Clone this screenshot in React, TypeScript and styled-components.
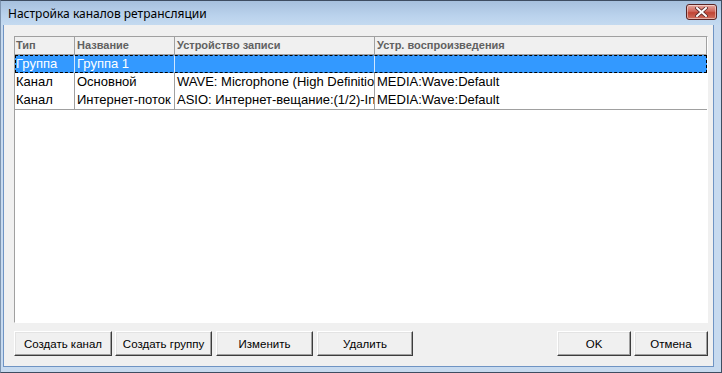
import React from 'react';
import styled, { createGlobalStyle } from 'styled-components';

const Global = createGlobalStyle`
  html, body { margin: 0; padding: 0; background: #fff; }
  body { width: 722px; height: 373px; overflow: hidden; }
`;

const Window = styled.div`
  width: 722px;
  height: 373px;
  box-sizing: border-box;
  display: flex;
  flex-direction: column;
  background: #c7daef;
  border: 1px solid #3e4d61;
  border-left-color: #7d94b0;
`;

const TitleBar = styled.div`
  height: 24px;
  flex: none;
  display: flex;
  align-items: center;
  justify-content: space-between;
  padding: 0 4px 0 7px;
  background: linear-gradient(#a6c0dd, #bad2ec 60%, #c4daf0);
`;

const Title = styled.span`
  font-family: 'Noto Sans', 'Liberation Sans', sans-serif;
  font-size: 12px;
  color: #000;
  margin-top: 1px;
`;

const CloseButton = styled.div`
  width: 31px;
  height: 16px;
  box-sizing: border-box;
  margin-top: -3px;
  border: 1px solid #5a2424;
  border-radius: 3px;
  background: linear-gradient(#e6a8a0, #d0665a 45%, #c04434 55%, #d07060);
  display: flex;
  align-items: center;
  justify-content: center;
  box-shadow: inset 0 0 0 1px rgba(255, 255, 255, 0.45);
`;

const Client = styled.div`
  flex: 1;
  display: flex;
  flex-direction: column;
  margin: 0 7px 5px 2px;
  background: #f0f0f0;
  border: 1px solid #6f94c4;
  border-top: none;
  padding: 11px 5px 10px 10px;
  min-height: 0;
`;

const ListBox = styled.div`
  flex: 1;
  display: flex;
  flex-direction: column;
  background: #fff;
  border-top: 1px solid #a0a0a0;
  border-left: 1px solid #a0a0a0;
  border-right: 1px solid #fff;
  border-bottom: 1px solid #fff;
  font-family: 'Liberation Sans', Arial, sans-serif;
`;

const cols = '59px 100px 200px 1fr';

const HeaderRow = styled.div`
  display: grid;
  grid-template-columns: ${cols};
  height: 17px;
  background: #f0f0f0;
  border-bottom: 1px solid #a0a0a0;
  border-right: 1px solid #a0a0a0;
`;

const HeaderCell = styled.div<{ $first?: boolean }>`
  font-size: 11px;
  font-weight: bold;
  color: #616161;
  line-height: 17px;
  padding-left: ${(p) => (p.$first ? 1 : 2)}px;
  border-left: ${(p) => (p.$first ? 'none' : '1px solid #a0a0a0')};
  white-space: nowrap;
  overflow: hidden;
`;

const Rows = styled.div`
  display: flex;
  flex-direction: column;
  border-bottom: 1px solid #a0a0a0;
`;

const Row = styled.div<{ $selected?: boolean }>`
  display: grid;
  grid-template-columns: ${cols};
  height: 18px;
  box-sizing: border-box;
  background: ${(p) => (p.$selected ? '#3399ff' : '#fff')};
  color: ${(p) => (p.$selected ? '#fff' : '#000')};
  outline: ${(p) => (p.$selected ? '1px dashed #000' : 'none')};
  outline-offset: -1px;
`;

const Cell = styled.div<{ $first?: boolean; $selected?: boolean }>`
  font-size: 13px;
  line-height: 18px;
  padding-left: ${(p) => (p.$first ? 1 : 2)}px;
  border-left: ${(p) =>
    p.$first ? 'none' : `1px solid ${p.$selected ? '#cfe6ff' : '#a0a0a0'}`};
  white-space: nowrap;
  overflow: hidden;
`;

const ButtonBar = styled.div`
  display: flex;
  align-items: center;
  margin-top: 8px;
`;

const Spacer = styled.div`
  flex: 1;
`;

const Button = styled.button<{ $w: number; $gap?: number }>`
  width: ${(p) => p.$w}px;
  height: 25px;
  box-sizing: border-box;
  margin: 0 0 0 ${(p) => p.$gap ?? 0}px;
  padding: 0;
  background: #f0f0f0;
  border-style: solid;
  border-width: 1px;
  border-color: #fff #3c3c3c #3c3c3c #fff;
  box-shadow: inset -1px -1px 0 #a0a0a0, inset 1px 1px 0 #e3e3e3;
  font-family: 'Liberation Sans', Arial, sans-serif;
  font-size: 11.5px;
  color: #000;
`;

const rows = [
  { t: 'Группа', n: 'Группа 1', r: '', p: '', sel: true },
  { t: 'Канал', n: 'Основной', r: 'WAVE: Microphone (High Definition Audio)', p: 'MEDIA:Wave:Default' },
  { t: 'Канал', n: 'Интернет-поток', r: 'ASIO: Интернет-вещание:(1/2)-Internet', p: 'MEDIA:Wave:Default' },
];

export default function App() {
  return (
    <>
      <Global />
      <Window>
        <TitleBar>
          <Title>Настройка каналов ретрансляции</Title>
          <CloseButton>
            <svg width="13" height="10" viewBox="0 0 13 10">
              <path
                d="M2 1 L11 9 M11 1 L2 9"
                stroke="#5a2a2a"
                strokeWidth="3.6"
                strokeLinecap="square"
              />
              <path
                d="M2 1 L11 9 M11 1 L2 9"
                stroke="#fff"
                strokeWidth="2"
                strokeLinecap="square"
              />
            </svg>
          </CloseButton>
        </TitleBar>
        <Client>
          <ListBox>
            <HeaderRow>
              <HeaderCell $first>Тип</HeaderCell>
              <HeaderCell>Название</HeaderCell>
              <HeaderCell>Устройство записи</HeaderCell>
              <HeaderCell>Устр. воспроизведения</HeaderCell>
            </HeaderRow>
            <Rows>
              {rows.map((r, i) => (
                <Row key={i} $selected={r.sel}>
                  <Cell $first $selected={r.sel}>{r.t}</Cell>
                  <Cell $selected={r.sel}>{r.n}</Cell>
                  <Cell $selected={r.sel}>{r.r}</Cell>
                  <Cell $selected={r.sel}>{r.p}</Cell>
                </Row>
              ))}
            </Rows>
          </ListBox>
          <ButtonBar>
            <Button $w={98}>Создать канал</Button>
            <Button $w={97} $gap={3}>Создать группу</Button>
            <Button $w={97} $gap={4}>Изменить</Button>
            <Button $w={96} $gap={4}>Удалить</Button>
            <Spacer />
            <Button $w={74}>OK</Button>
            <Button $w={74} $gap={3}>Отмена</Button>
          </ButtonBar>
        </Client>
      </Window>
    </>
  );
}
